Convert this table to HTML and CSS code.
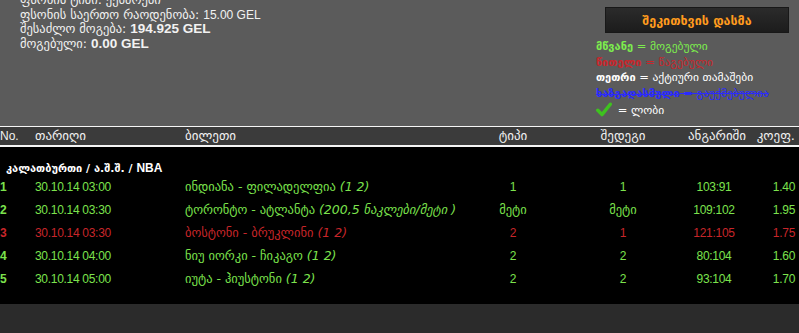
FILE: index.html
```html
<!DOCTYPE html>
<html lang="ka">
<head>
<meta charset="utf-8">
<link rel="stylesheet" href="styles.css">
</head>
<body>
<div class="top">
  <div class="info">
    <div class="line">ფსონის ტიპი: ექსპრესი</div>
    <div class="line">ფსონის საერთო რაოდენობა: <span class="lat">15.00 GEL</span></div>
    <div class="line">შესაძლო მოგება: <b class="lat">194.925 GEL</b></div>
    <div class="line">მოგებული: <b class="lat">0.00 GEL</b></div>
  </div>
  <div class="side">
    <button class="ask">შეკითხვის დასმა</button>
    <ul class="legend">
      <li class="green"><b>მწვანე</b> = მოგებული</li>
      <li class="red"><b>წითელი</b> = წაგებული</li>
      <li class="white"><b>თეთრი</b> = აქტიური თამაშები</li>
      <li class="blue"><b>ხაზგადასმული</b> = გაუქმებულია</li>
      <li class="white check"><svg class="tick" width="16" height="15" viewBox="0 0 16 15"><path d="M1.8 8.3 L6 12.6 L14.3 2.2" fill="none" stroke="#3ec21f" stroke-width="3.4" stroke-linecap="round" stroke-linejoin="round"/></svg> = ლობი</li>
    </ul>
  </div>
</div>
<div class="thead row">
  <div class="c-no lat">No.</div>
  <div class="c-date">თარიღი</div>
  <div class="c-ticket">ბილეთი</div>
  <div class="c-type">ტიპი</div>
  <div class="c-res">შედეგი</div>
  <div class="c-score">ანგარიში</div>
  <div class="c-coef">კოეფ.</div>
</div>
<div class="tbody">
  <div class="cat">კალათბურთი / ა.შ.შ. / <span class="lat">NBA</span></div>
  <div class="row item win">
    <div class="c-no">1</div><div class="c-date num">30.10.14 03:00</div>
    <div class="c-ticket">ინდიანა - ფილადელფია <i>(1 2)</i></div>
    <div class="c-type num">1</div><div class="c-res num">1</div>
    <div class="c-score num">103:91</div><div class="c-coef num">1.40</div>
  </div>
  <div class="row item win">
    <div class="c-no">2</div><div class="c-date num">30.10.14 03:30</div>
    <div class="c-ticket">ტორონტო - ატლანტა <i>(200,5 ნაკლები/მეტი )</i></div>
    <div class="c-type">მეტი</div><div class="c-res">მეტი</div>
    <div class="c-score num">109:102</div><div class="c-coef num">1.95</div>
  </div>
  <div class="row item lose">
    <div class="c-no">3</div><div class="c-date num">30.10.14 03:30</div>
    <div class="c-ticket">ბოსტონი - ბრუკლინი <i>(1 2)</i></div>
    <div class="c-type num">2</div><div class="c-res num">1</div>
    <div class="c-score num">121:105</div><div class="c-coef num">1.75</div>
  </div>
  <div class="row item win">
    <div class="c-no">4</div><div class="c-date num">30.10.14 04:00</div>
    <div class="c-ticket">ნიუ იორკი - ჩიკაგო <i>(1 2)</i></div>
    <div class="c-type num">2</div><div class="c-res num">2</div>
    <div class="c-score num">80:104</div><div class="c-coef num">1.60</div>
  </div>
  <div class="row item win">
    <div class="c-no">5</div><div class="c-date num">30.10.14 05:00</div>
    <div class="c-ticket">იუტა - ჰიუსტონი <i>(1 2)</i></div>
    <div class="c-type num">2</div><div class="c-res num">2</div>
    <div class="c-score num">93:104</div><div class="c-coef num">1.70</div>
  </div>
</div>
<div class="bottom"></div>
</body>
</html>
```
FILE: styles.css
```css
html, body { margin: 0; padding: 0; }
body {
  background: #5b5b5b;
  font-family: "DejaVu Sans", "Liberation Sans", sans-serif;
  font-size: 11px;
  color: #f2f2f2;
  overflow: hidden;
  width: 799px;
  height: 333px;
}
.lat { font-family: "Liberation Sans", Arial, sans-serif; }
.top {
  height: 126px;
  display: flex;
  justify-content: space-between;
}
.info {
  padding-left: 20px;
  margin-top: -7px;
  font-size: 12.5px;
}
.info .line {
  line-height: 14.5px;
  height: 14.5px;
  white-space: nowrap;
}
.info span.lat { font-size: 12px; }
.info b.lat { font-size: 13.5px; }
.side {
  width: 203px;
  padding-top: 7px;
}
.ask {
  display: block;
  margin-left: 9px;
  width: 184px;
  height: 26px;
  background: linear-gradient(#2b2b2b, #1c1c1c);
  border: 1px solid #181818;
  color: #ff9b1e;
  font-family: "DejaVu Sans", sans-serif;
  font-size: 12.5px;
  font-weight: bold;
  padding: 0;
}
.legend {
  list-style: none;
  margin: 6px 0 0 0;
  padding: 0;
  font-size: 11.5px;
}
.legend li {
  line-height: 15.5px;
  height: 15.5px;
  white-space: nowrap;
}
.legend b { font-size: 11px; }
.legend .green { color: #7dee4d; }
.legend .red { color: #c9262b; }
.legend .white { color: #ffffff; }
.legend .blue { color: #2a2aff; text-decoration: line-through; }
.legend .check { height: 19px; line-height: 19px; }
.tick { vertical-align: -3px; margin-right: 2px; }
.row {
  display: grid;
  grid-template-columns: 35px 150px 283px 90px 130px 52px 59px;
  align-items: center;
}
.thead {
  height: 18px;
  background: #3b3b3b;
  border-top: 1px solid #f5f5f5;
  border-bottom: 2px solid #f5f5f5;
  color: #f0f0f0;
  font-size: 13px;
  line-height: 18px;
}
.thead .c-no { font-size: 12px; }
.c-type, .c-res, .c-score { text-align: center; }
.c-coef { text-align: right; padding-right: 4px; white-space: nowrap; }
.tbody {
  background: #000;
  height: 157px;
}
.cat {
  height: 28px;
  box-sizing: border-box;
  padding: 13px 0 0 6px;
  line-height: 16px;
  font-size: 11px;
  font-weight: bold;
  color: #fff;
}
.cat .lat { font-size: 12px; }
.item {
  height: 23px;
  font-size: 12.5px;
}
.item .c-no { font-weight: bold; font-family: "Liberation Sans", sans-serif; font-size: 12px; }
.c-ticket { white-space: nowrap; }
.num {
  font-family: "Liberation Sans", sans-serif;
  font-size: 12px;
  letter-spacing: -0.3px;
}
.item i { font-style: italic; }
.win { color: #7ce34d; }
.lose { color: #c8262a; }
.bottom {
  height: 40px;
  background: #2b2b2b;
}
```
